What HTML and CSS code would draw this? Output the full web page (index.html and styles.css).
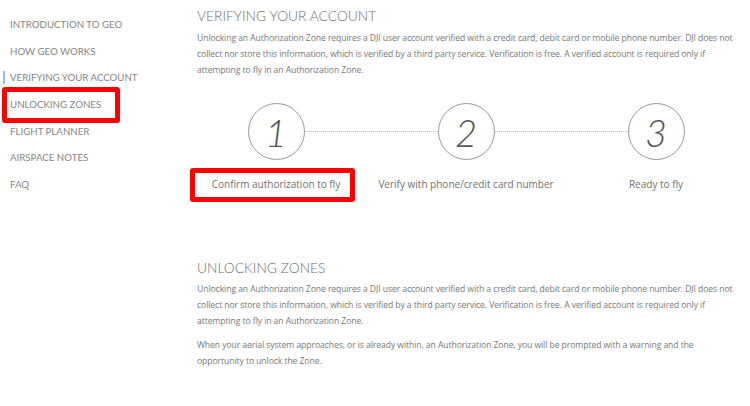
FILE: index.html
```html
<!DOCTYPE html>
<html lang="en">
<head>
<meta charset="UTF-8" />
<meta name="viewport" content="width=device-width, initial-scale=1" />
<title>GEO - Verifying your account</title>
<link rel="stylesheet" href="styles.css">
</head>
<body>
  <nav class="sidebar">
    <ul>
      <li>Introduction to GEO</li>
      <li>How GEO works</li>
      <li class="active">Verifying your account</li>
      <li class="marked">Unlocking zones</li>
      <li>Flight planner</li>
      <li>Airspace notes</li>
      <li>FAQ</li>
    </ul>
  </nav>

  <main class="content">
    <section>
      <h2>Verifying your account</h2>
      <p>Unlocking an Authorization Zone requires a DJI user account verified with a credit card, debit card or mobile phone number. DJI does not collect nor store this information, which is verified by a third party service. Verification is free. A verified account is required only if attempting to fly in an Authorization Zone.</p>

      <div class="steps">
        <div class="step">
          <div class="circle">1</div>
          <span class="label marked">Confirm authorization to fly</span>
        </div>
        <div class="step">
          <div class="circle">2</div>
          <span class="label">Verify with phone/credit card number</span>
        </div>
        <div class="step">
          <div class="circle">3</div>
          <span class="label">Ready to fly</span>
        </div>
      </div>
    </section>

    <section class="second">
      <h2>Unlocking zones</h2>
      <p>Unlocking an Authorization Zone requires a DJI user account verified with a credit card, debit card or mobile phone number. DJI does not collect nor store this information, which is verified by a third party service. Verification is free. A verified account is required only if attempting to fly in an Authorization Zone.</p>
      <p>When your aerial system approaches, or is already within, an Authorization Zone, you will be prompted with a warning and the opportunity to unlock the Zone.</p>
    </section>
  </main>
</body>
</html>
```

FILE: styles.css
```css
/* Base */
*, *::before, *::after {
  box-sizing: border-box;
}
body {
  margin: 0;
  display: flex;
  background: #fff;
  color: #777;
  font-family: 'Open Sans', 'Liberation Sans', sans-serif;
}

/* Sidebar */
.sidebar {
  width: 180px;
  flex-shrink: 0;
  padding-top: 11px;
}
.sidebar ul {
  list-style: none;
  margin: 0;
  padding: 0;
}
.sidebar li {
  position: relative;
  height: 26.67px;
  line-height: 26.67px;
  padding-left: 10px;
  font-family: 'Lato', 'Open Sans', sans-serif;
  font-size: 9.7px;
  text-transform: uppercase;
  color: #858585;
}
.sidebar li.active::before {
  content: '';
  position: absolute;
  left: 3px;
  top: 7px;
  width: 2px;
  height: 13px;
  background: #8cc2ea;
}

/* red annotation boxes */
.sidebar li.marked::after {
  content: '';
  position: absolute;
  left: 2px;
  width: 118px;
  top: -4px;
  height: 36px;
  border: 5px solid #f00;
  border-radius: 3px;
}
.label.marked {
  position: relative;
}
.label.marked::after {
  content: '';
  position: absolute;
  left: -22px;
  right: -15px;
  top: -8px;
  bottom: -10px;
  border: 5px solid #f00;
  border-radius: 3px;
}

/* Content */
.content {
  flex: 1;
  padding: 0 15px 0 17px;
}
h2 {
  margin: 6px 0 4px;
  font-family: 'Lato', 'Open Sans', sans-serif;
  font-weight: 300;
  font-size: 13.8px;
  line-height: 20px;
  text-transform: uppercase;
  color: #6e6e6e;
}
p {
  margin: 0;
  font-size: 8.6px;
  letter-spacing: -0.07px;
  line-height: 16px;
}
p + p {
  margin-top: 8px;
}

/* Steps */
.steps {
  position: relative;
  display: grid;
  grid-template-columns: repeat(3, 1fr);
  margin: 25px -16px 0;
}
.steps::before {
  content: '';
  position: absolute;
  top: 28px;
  left: 16.6%;
  right: 16.6%;
  border-top: 1px dotted #bbb;
}
.step {
  display: flex;
  flex-direction: column;
  align-items: center;
}
.circle {
  position: relative;
  width: 57px;
  height: 57px;
  border: 1px solid #999;
  border-radius: 50%;
  background: #fff;
  display: flex;
  align-items: center;
  justify-content: center;
  font-family: 'Lato', 'Open Sans', sans-serif;
  font-weight: 300;
  font-style: italic;
  font-size: 38px;
  color: #555;
}
.label {
  margin-top: 16px;
  font-size: 10px;
  line-height: 16px;
  color: #707070;
}

.second {
  margin-top: 66px;
}
.second h2 {
  margin-top: 0;
  margin-bottom: 3px;
}
```
